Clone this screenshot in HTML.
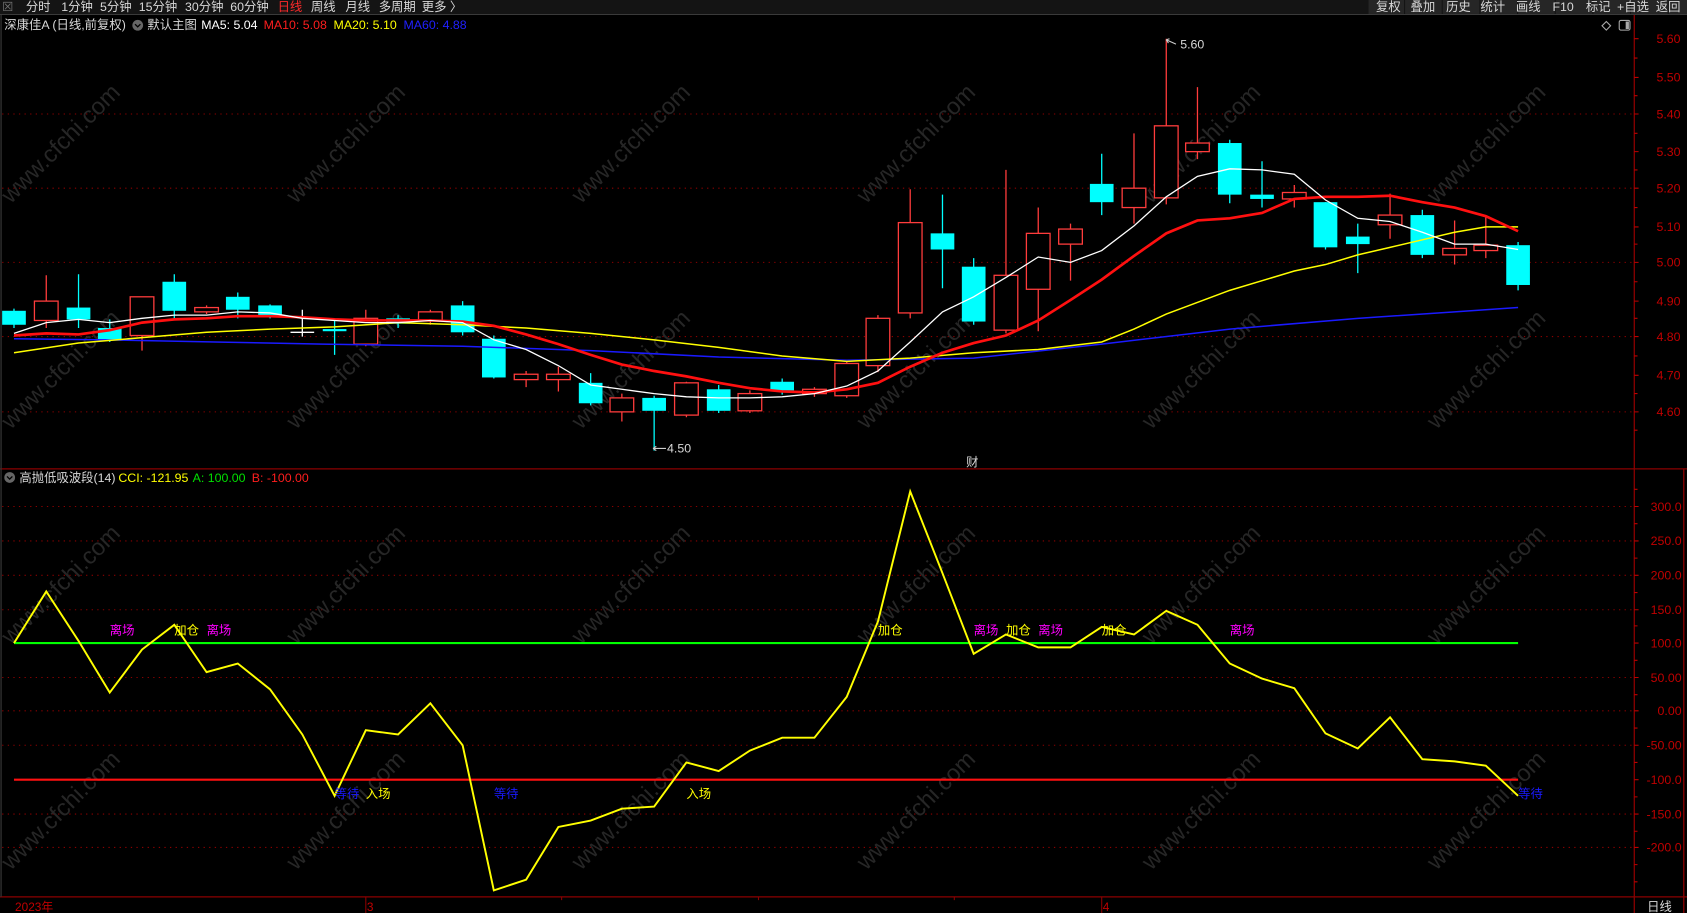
<!DOCTYPE html>
<html><head><meta charset="utf-8"><style>
html,body{margin:0;padding:0;background:#000;overflow:hidden}
svg{display:block}
text{font-family:"Liberation Sans","Noto Sans CJK SC",sans-serif}
</style></head><body>
<svg width="1687" height="913" viewBox="0 0 1568 849" preserveAspectRatio="none" xmlns="http://www.w3.org/2000/svg">
<rect width="1568" height="849" fill="#000"/>
<!-- toolbar -->
<rect x="0" y="0" width="1568" height="13" fill="#141414"/>
<line x1="0" y1="13.5" x2="1568" y2="13.5" stroke="#3a3a3a"/>
<g font-size="11.5" fill="#d8d8d8">
<text x="2" y="10" fill="#777">☒</text>
<text x="24" y="10">分时</text><text x="57" y="10">1分钟</text><text x="93" y="10">5分钟</text><text x="129" y="10">15分钟</text><text x="172" y="10">30分钟</text><text x="214" y="10">60分钟</text>
<text x="258" y="10" fill="#ff2a2a">日线</text><text x="289" y="10">周线</text><text x="321" y="10">月线</text><text x="352" y="10">多周期</text><text x="392" y="10">更多 〉</text>
</g>
<g fill="#262626">
<rect x="1272" y="0" width="33" height="13"/><rect x="1306" y="0" width="34" height="13"/><rect x="1341" y="0" width="34" height="13"/><rect x="1376" y="0" width="34" height="13"/><rect x="1411" y="0" width="34" height="13"/><rect x="1446" y="0" width="34" height="13"/><rect x="1481" y="0" width="34" height="13"/><rect x="1516" y="0" width="34" height="13"/><rect x="1551" y="0" width="17" height="13"/>
</g>
<g font-size="11.5" fill="#d8d8d8">
<text x="1279" y="10">复权</text><text x="1311" y="10">叠加</text><text x="1344" y="10">历史</text><text x="1376" y="10">统计</text><text x="1409" y="10">画线</text><text x="1443" y="10">F10</text><text x="1474" y="10">标记</text><text x="1503" y="10">+自选</text><text x="1539" y="10">返回</text>
</g>
<!-- header main -->
<g font-size="11.5">
<text x="4" y="27" fill="#d8d8d8">深康佳A (日线,前复权)</text>
<circle cx="128" cy="23.5" r="5" fill="#666"/><path d="M125.5 22.5 L128 25 L130.5 22.5" stroke="#000" stroke-width="1.2" fill="none"/>
<text x="137" y="27" fill="#d8d8d8">默认主图</text>
<text x="187" y="27" fill="#fff">MA5: 5.04</text>
<text x="245" y="27" fill="#ff1e1e">MA10: 5.08</text>
<text x="310" y="27" fill="#ffff00">MA20: 5.10</text>
<text x="375" y="27" fill="#2020ff">MA60: 4.88</text>
</g>
<path d="M1493 20 L1497 24 L1493 28 L1489 24 Z" stroke="#aaa" fill="none"/>
<rect x="1505" y="19" width="10" height="9" rx="1.5" stroke="#aaa" fill="none"/><rect x="1511" y="20" width="3" height="7" fill="#aaa"/>
<!-- frame lines -->
<g stroke="#8b0000" stroke-width="1.2">
<line x1="1519" y1="14" x2="1519" y2="849"/>
<line x1="1565" y1="436" x2="1565" y2="849"/>
<line x1="0" y1="436" x2="1568" y2="436"/>
<line x1="0" y1="834" x2="1568" y2="834"/>
<line x1="1" y1="14" x2="1" y2="834" stroke="#333"/>
</g>
<!-- price grid -->
<g stroke="#8b0000" stroke-dasharray="1.2 4" stroke-width="1">
<line x1="2" y1="106" x2="1519" y2="106"/><line x1="2" y1="175" x2="1519" y2="175"/><line x1="2" y1="244" x2="1519" y2="244"/><line x1="2" y1="313" x2="1519" y2="313"/><line x1="2" y1="383" x2="1519" y2="383"/>
<line x1="2" y1="471" x2="1519" y2="471"/><line x1="2" y1="503" x2="1519" y2="503"/><line x1="2" y1="535" x2="1519" y2="535"/><line x1="2" y1="567" x2="1519" y2="567"/><line x1="2" y1="630" x2="1519" y2="630"/><line x1="2" y1="661" x2="1519" y2="661"/><line x1="2" y1="693" x2="1519" y2="693"/><line x1="2" y1="757" x2="1519" y2="757"/><line x1="2" y1="788" x2="1519" y2="788"/>
</g>
<!-- axis labels -->
<g font-size="11.5" fill="#c00000" text-anchor="end">
<text x="1562" y="40">5.60</text><text x="1562" y="76">5.50</text><text x="1562" y="110">5.40</text><text x="1562" y="145">5.30</text><text x="1562" y="179">5.20</text><text x="1562" y="215">5.10</text><text x="1562" y="248">5.00</text><text x="1562" y="284">4.90</text><text x="1562" y="317">4.80</text><text x="1562" y="353">4.70</text><text x="1562" y="387">4.60</text>
<text x="1563" y="475">300.0</text><text x="1563" y="507">250.0</text><text x="1563" y="539">200.0</text><text x="1563" y="571">150.0</text><text x="1563" y="602">100.0</text><text x="1563" y="634">50.00</text><text x="1563" y="665">0.00</text><text x="1563" y="697">-50.00</text><text x="1563" y="729">-100.0</text><text x="1563" y="761">-150.0</text><text x="1563" y="792">-200.0</text>
</g>
<g stroke="#c00000">
<path d="M1519 36h4M1519 72h4M1519 106h4M1519 141h4M1519 175h4M1519 211h4M1519 244h4M1519 280h4M1519 313h4M1519 349h4M1519 383h4M1519 54h3M1519 89h3M1519 124h3M1519 158h3M1519 193h3M1519 227h3M1519 262h3M1519 296h3M1519 331h3M1519 366h3M1519 400h3"/>
<path d="M1519 471h4M1519 503h4M1519 535h4M1519 567h4M1519 598h4M1519 630h4M1519 661h4M1519 693h4M1519 725h4M1519 757h4M1519 788h4M1519 455h3M1519 487h3M1519 519h3M1519 551h3M1519 582h3M1519 614h3M1519 646h3M1519 677h3M1519 709h3M1519 741h3M1519 773h3M1519 804h3M1519 820h3"/>
</g>
<!-- watermarks -->
<g font-size="22" fill="#262626" font-family="Liberation Sans">
<text transform="translate(10,190) rotate(-45)">www.cfchi.com</text>
<text transform="translate(275,190) rotate(-45)">www.cfchi.com</text>
<text transform="translate(540,190) rotate(-45)">www.cfchi.com</text>
<text transform="translate(805,190) rotate(-45)">www.cfchi.com</text>
<text transform="translate(1070,190) rotate(-45)">www.cfchi.com</text>
<text transform="translate(1335,190) rotate(-45)">www.cfchi.com</text>
<text transform="translate(10,400) rotate(-45)">www.cfchi.com</text>
<text transform="translate(275,400) rotate(-45)">www.cfchi.com</text>
<text transform="translate(540,400) rotate(-45)">www.cfchi.com</text>
<text transform="translate(805,400) rotate(-45)">www.cfchi.com</text>
<text transform="translate(1070,400) rotate(-45)">www.cfchi.com</text>
<text transform="translate(1335,400) rotate(-45)">www.cfchi.com</text>
<text transform="translate(10,600) rotate(-45)">www.cfchi.com</text>
<text transform="translate(275,600) rotate(-45)">www.cfchi.com</text>
<text transform="translate(540,600) rotate(-45)">www.cfchi.com</text>
<text transform="translate(805,600) rotate(-45)">www.cfchi.com</text>
<text transform="translate(1070,600) rotate(-45)">www.cfchi.com</text>
<text transform="translate(1335,600) rotate(-45)">www.cfchi.com</text>
<text transform="translate(10,810) rotate(-45)">www.cfchi.com</text>
<text transform="translate(275,810) rotate(-45)">www.cfchi.com</text>
<text transform="translate(540,810) rotate(-45)">www.cfchi.com</text>
<text transform="translate(805,810) rotate(-45)">www.cfchi.com</text>
<text transform="translate(1070,810) rotate(-45)">www.cfchi.com</text>
<text transform="translate(1335,810) rotate(-45)">www.cfchi.com</text>
</g>
<!-- wicks -->
<g stroke="#00ffff" stroke-width="1.2">
<path d="M13 287V305M73 255V305M102 297V318M162 255V298M221 272V296M251 283V296M311 296V330M370 293V305M430 280V312M459 312V352M549 347V377M608 368V419M668 358V384M727 352V367M876 181V268M905 240V302M1024 143V200M1143 130V189M1173 150V193M1232 188V232M1262 208V254M1322 195V240M1411 225V270"/>
</g>
<g stroke="#ff3c3c" stroke-width="1.2">
<path d="M43 256V305M132 276V326M192 284V292M340 288V322M400 288V302M489 345V360M519 341V364M578 366V392M638 355V388M697 363V384M757 360V369M787 335V370M816 293V346M846 176V296M935 158V310M965 193V308M995 208V261M1054 124V208M1084 36V190M1113 81V148M1203 172V193M1292 180V222M1352 205V246M1381 202V240"/>
</g>
<path d="M281 288V313M270 309H292" stroke="#fff" stroke-width="1.2"/>
<!-- cyan bodies -->
<g fill="#00ffff">
<rect x="2" y="289" width="22" height="13"/><rect x="62" y="286" width="22" height="11"/><rect x="91" y="305" width="22" height="11"/><rect x="151" y="262" width="22" height="27"/><rect x="210" y="276" width="22" height="12"/><rect x="240" y="284" width="22" height="10"/><rect x="300" y="306" width="22" height="2"/><rect x="359" y="296" width="22" height="5"/><rect x="419" y="284" width="22" height="25"/><rect x="448" y="315" width="22" height="36"/><rect x="538" y="356" width="22" height="19"/><rect x="597" y="370" width="22" height="12"/><rect x="657" y="362" width="22" height="20"/><rect x="716" y="355" width="22" height="8"/><rect x="865" y="217" width="22" height="15"/><rect x="894" y="248" width="22" height="51"/><rect x="1013" y="171" width="22" height="17"/><rect x="1132" y="133" width="22" height="48"/><rect x="1162" y="181" width="22" height="4"/><rect x="1221" y="188" width="22" height="42"/><rect x="1251" y="220" width="22" height="7"/><rect x="1311" y="200" width="22" height="37"/><rect x="1400" y="228" width="22" height="37"/>
</g>
<!-- red hollow bodies -->
<g fill="#000" stroke="#ff3c3c" stroke-width="1.2">
<rect x="32" y="280" width="22" height="18"/><rect x="121" y="276" width="22" height="36"/><rect x="181" y="286" width="22" height="4"/><rect x="329" y="296" width="22" height="24"/><rect x="389" y="290" width="22" height="8"/><rect x="478" y="348" width="22" height="5"/><rect x="508" y="348" width="22" height="5"/><rect x="567" y="370" width="22" height="13"/><rect x="627" y="356" width="22" height="30"/><rect x="686" y="366" width="22" height="16"/><rect x="746" y="362" width="22" height="4"/><rect x="776" y="338" width="22" height="30"/><rect x="805" y="296" width="22" height="44"/><rect x="835" y="207" width="22" height="84"/><rect x="924" y="256" width="22" height="51"/><rect x="954" y="217" width="22" height="52"/><rect x="984" y="213" width="22" height="14"/><rect x="1043" y="175" width="22" height="18"/><rect x="1073" y="117" width="22" height="67"/><rect x="1102" y="133" width="22" height="8"/><rect x="1192" y="179" width="22" height="6"/><rect x="1281" y="200" width="22" height="9"/><rect x="1341" y="231" width="22" height="6"/><rect x="1370" y="228" width="22" height="5"/>
</g>
<!-- MAs -->
<polyline fill="none" stroke="#1a1aff" stroke-width="1.4" points="13,315 100,316 200,318 300,320 430,322 549,326 668,332 787,335 905,333 1024,320 1143,306 1262,296 1352,290 1411,286"/>
<polyline fill="none" stroke="#ffff00" stroke-width="1.4" points="13,328 73,319 132,314 192,309 251,306 311,304 370,300 430,302 489,305 549,310 608,316 668,323 727,331 787,336 846,333 905,328 965,325 1024,318 1054,306 1084,292 1143,270 1203,252 1232,246 1262,237 1292,230 1322,223 1352,216 1381,211 1411,211"/>
<polyline fill="none" stroke="#ff1010" stroke-width="2.5" points="13,312 43,310 73,311 102,307 132,300 162,297 192,296 221,294 251,294 281,295 311,297 340,298 370,298 400,298 430,299 459,303 489,311 519,320 549,330 578,339 608,345 638,350 668,356 697,361 727,364 757,365 787,362 816,356 846,341 876,328 905,319 935,312 965,298 995,279 1024,260 1054,238 1084,217 1113,205 1143,203 1173,198 1203,185 1232,183 1262,183 1292,182 1322,188 1352,193 1381,201 1411,215"/>
<polyline fill="none" stroke="#ffffff" stroke-width="1.2" points="13,310 43,300 73,297 102,300 132,296 162,293 192,293 221,290 251,291 281,296 311,298 340,300 370,300 400,298 430,300 459,316 489,325 519,340 549,358 578,362 608,366 638,369 668,370 697,370 727,369 757,366 787,359 816,345 846,318 876,290 905,276 935,258 965,239 995,244 1024,233 1054,210 1084,183 1113,164 1143,157 1173,158 1203,162 1232,186 1262,203 1292,206 1322,216 1352,227 1381,227 1411,232"/>
<!-- markers -->
<g font-size="11.5" fill="#d8d8d8">
<path d="M1084 37 L1093 41 M1084 37 l3 -1 M1084 37 l2 3" stroke="#ccc" fill="none"/>
<text x="1097" y="45">5.60</text>
<path d="M607 417 H619 M607 417 l3 -2 M607 417 l3 2" stroke="#ccc" fill="none"/>
<text x="620" y="421">4.50</text>
<text x="898" y="434">财</text>
</g>
<!-- indicator header -->
<g font-size="11.5">
<circle cx="9" cy="444" r="5" fill="#666"/><path d="M6.5 443 L9 445.5 L11.5 443" stroke="#000" stroke-width="1.2" fill="none"/>
<text x="18" y="448" fill="#d8d8d8">高抛低吸波段(14)</text>
<text x="110" y="448" fill="#ffff00">CCI: -121.95</text>
<text x="179" y="448" fill="#00e000">A: 100.00</text>
<text x="234" y="448" fill="#ff1e1e">B: -100.00</text>
</g>
<line x1="13" y1="598" x2="1411" y2="598" stroke="#00ff00" stroke-width="2"/>
<line x1="13" y1="725" x2="1411" y2="725" stroke="#ff1010" stroke-width="2"/>
<polyline fill="none" stroke="#ffff00" stroke-width="1.8" points="13,598 43,550 73,596 102,644 132,604 162,581 192,625 221,617 251,641 281,683 311,740 340,679 370,683 400,654 430,693 459,828 489,818 519,769 549,763 578,752 608,750 638,709 668,717 697,698 727,686 757,686 787,648 816,578 846,457 876,533 905,608 935,590 965,602 995,602 1024,583 1054,590 1084,568 1113,581 1143,617 1173,631 1203,640 1232,682 1262,696 1292,667 1322,706 1352,708 1381,712 1411,740"/>
<g font-size="11.5">
<g fill="#ff00ff"><text x="102" y="590">离场</text><text x="192" y="590">离场</text><text x="905" y="590">离场</text><text x="965" y="590">离场</text><text x="1143" y="590">离场</text></g>
<g fill="#ffff00"><text x="162" y="590">加仓</text><text x="816" y="590">加仓</text><text x="935" y="590">加仓</text><text x="1024" y="590">加仓</text><text x="340" y="742">入场</text><text x="638" y="742">入场</text></g>
<g fill="#1a1aff"><text x="311" y="742">等待</text><text x="459" y="742">等待</text><text x="1411" y="742">等待</text></g>
</g>
<!-- bottom axis -->
<g stroke="#8b0000"><path d="M340 834V849M1024 834V849M522 834v3M705 834v3M887 834v3"/></g>
<g font-size="11" fill="#c00000">
<text x="14" y="847">2023年</text><text x="341" y="847">3</text><text x="1025" y="847">4</text>
</g>
<text x="1531" y="847" font-size="11.5" fill="#d8d8d8">日线</text>
</svg>
</body></html>
